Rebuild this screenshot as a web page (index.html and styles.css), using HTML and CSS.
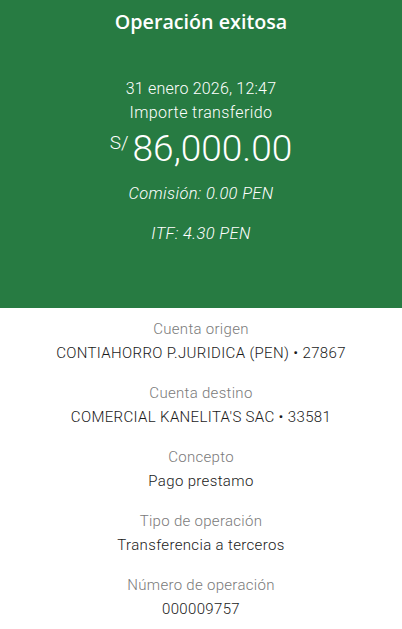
FILE: index.html
```html
<!DOCTYPE html>
<html lang="es">
<head>
<meta charset="utf-8">
<link rel="stylesheet" href="styles.css">
</head>
<body>
<div class="page">
  <section class="hero">
    <h1 class="title">Operación exitosa</h1>
    <div class="date">31 enero 2026, 12:47</div>
    <div class="caption">Importe transferido</div>
    <div class="amount"><span class="currency">S/</span><span class="value">86,000.00</span></div>
    <div class="fee">Comisión: 0.00 PEN</div>
    <div class="fee fee-itf">ITF: 4.30 PEN</div>
  </section>
  <section class="details">
    <div class="item">
      <div class="label">Cuenta origen</div>
      <div class="val">CONTIAHORRO P.JURIDICA (PEN) • 27867</div>
    </div>
    <div class="item">
      <div class="label">Cuenta destino</div>
      <div class="val">COMERCIAL KANELITA'S SAC • 33581</div>
    </div>
    <div class="item">
      <div class="label">Concepto</div>
      <div class="val">Pago prestamo</div>
    </div>
    <div class="item">
      <div class="label">Tipo de operación</div>
      <div class="val">Transferencia a terceros</div>
    </div>
    <div class="item">
      <div class="label">Número de operación</div>
      <div class="val">000009757</div>
    </div>
  </section>
</div>
</body>
</html>
```

FILE: styles.css
```css
html, body {
  margin: 0;
  padding: 0;
  background: #ffffff;
}
body {
  font-family: Roboto, "Liberation Sans", sans-serif;
}
.page {
  width: 402px;
}
.hero {
  background: #277b42;
  color: #ffffff;
  height: 308px;
  box-sizing: border-box;
  padding-top: 10px;
  display: flex;
  flex-direction: column;
  align-items: center;
  text-align: center;
}
.title {
  margin: 0;
  font-family: "Open Sans", Roboto, sans-serif;
  font-weight: 600;
  font-size: 19.7px;
  line-height: 24px;
}
.date {
  margin-top: 43px;
  font-size: 16px;
  font-weight: 300;
  line-height: 24px;
  letter-spacing: 0.2px;
}
.caption {
  font-size: 16px;
  font-weight: 300;
  line-height: 24px;
  letter-spacing: 0.4px;
}
.amount {
  display: flex;
  align-items: flex-start;
  justify-content: center;
  line-height: 44px;
  height: 44px;
  margin-top: 2px;
}
.currency {
  font-size: 19px;
  font-weight: 300;
  line-height: 22px;
  margin-top: 5px;
  margin-right: 4px;
}
.value {
  font-size: 37px;
  font-weight: 300;
}
.fee {
  margin-top: 11px;
  font-size: 16.5px;
  font-weight: 300;
  font-style: italic;
  line-height: 24px;
  letter-spacing: 0.35px;
}
.fee-itf {
  margin-top: 16px;
}
.details {
  padding-top: 9px;
  display: flex;
  flex-direction: column;
  gap: 16px;
  text-align: center;
}
.label {
  font-size: 15px;
  line-height: 24px;
  color: #7a7a7a;
  font-weight: 300;
  letter-spacing: 0.3px;
}
.val {
  font-size: 15px;
  line-height: 24px;
  color: #1a1a1a;
  font-weight: 300;
  letter-spacing: 0.35px;
}
```
